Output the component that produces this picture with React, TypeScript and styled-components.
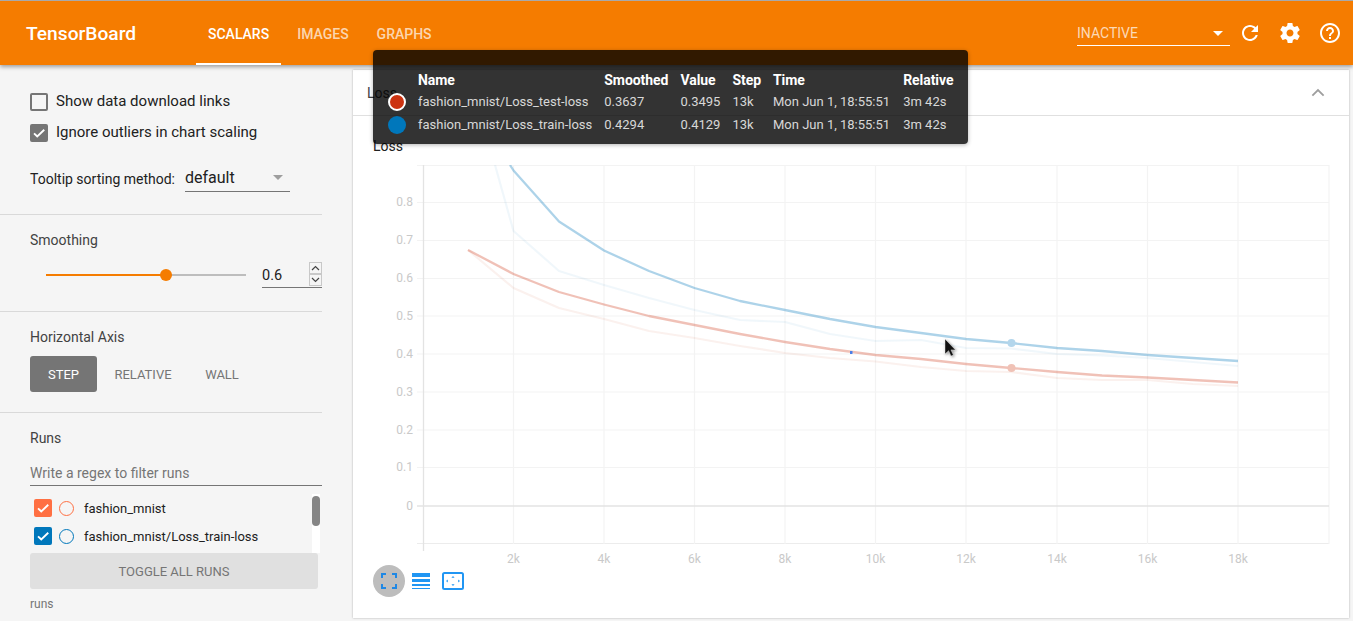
import React from 'react';
import styled, { createGlobalStyle } from 'styled-components';

const Global = createGlobalStyle`
  html, body { margin: 0; padding: 0; background: #f5f5f5; }
  body { width: 1353px; height: 621px; overflow: hidden; font-family: Roboto, "Liberation Sans", sans-serif; }
  * { box-sizing: border-box; }
`;
const Page = styled.div`
  width: 1353px; height: 621px; position: relative; overflow: hidden;
  display: flex; flex-direction: column; border-top: 1px solid #a9a9a9;
`;
const Toolbar = styled.header`
  height: 64px; flex: none; background: #f57c00; color: #fff; display: flex; align-items: stretch;
  box-shadow: 0 2px 4px rgba(0,0,0,.35); position: relative; z-index: 2;
`;
const Brand = styled.div`
  width: 196px; padding: 21px 0 0 26px; font-size: 19.2px; font-weight: 500; line-height: 24px; white-space: nowrap;
`;
const Tab = styled.div<{ $active?: boolean }>`
  padding: 24px 12px 0; margin-right: 4px; height: 64px; font-size: 14px; font-weight: 500; line-height: 18px;
  color: ${p => (p.$active ? '#fff' : 'rgba(255,255,255,.7)')};
  border-bottom: 2px solid ${p => (p.$active ? '#fff' : 'transparent')};
`;
const Spacer = styled.div` flex: 1; `;
const RunSelect = styled.div`
  width: 153px; height: 30px; margin-top: 15px; margin-right: 8px; border-bottom: 1px solid #fff; display: flex;
  justify-content: space-between; align-items: center; padding: 5px 7px 0 0;
  font-size: 14px; color: rgba(255,255,255,.72);
`;
const CaretDown = styled.div<{ $color: string; $size: number }>`
  width: 0; height: 0; border-left: ${p => p.$size}px solid transparent; border-right: ${p => p.$size}px solid transparent;
  border-top: ${p => p.$size}px solid ${p => p.$color};
`;
const ToolIcons = styled.div` display: flex; align-items: center; gap: 16px; padding-right: 11px; margin-top: -1px; `;
const Body = styled.div` flex: 1; display: flex; min-height: 0; `;
const Sidebar = styled.aside` width: 353px; flex: none; padding-right: 31px; color: #212121; `;
const Section = styled.section<{ $h: number; $pt: number }>`
  height: ${p => p.$h}px; padding: ${p => p.$pt}px 0 0 30px; border-bottom: 1px solid #d9d9d9;
`;
const LastSection = styled.section` padding: 16px 0 0 30px; `;
const CheckRow = styled.label`
  display: flex; align-items: center; height: 31px; font-size: 15px; color: #212121; gap: 8px; white-space: nowrap;
`;
const CheckText = styled.span` margin-top: -2px; `;
const Box = styled.span<{ $checked?: boolean }>`
  width: 18px; height: 18px; border-radius: 2px; flex: none; display: flex; align-items: center; justify-content: center;
  background: ${p => (p.$checked ? '#757575' : 'transparent')};
  border: 2px solid #757575;
`;
const SortRow = styled.div` display: flex; align-items: flex-start; margin-top: 20px; font-size: 14px; `;
const SortLabel = styled.span` padding-top: 3px; width: 155px; white-space: nowrap; `;
const SortSelect = styled.div`
  width: 105px; height: 25px; margin-top: -1px; border-bottom: 1px solid #757575; display: flex; justify-content: space-between; align-items: center;
  font-size: 16px; color: #212121; padding: 0 7px 3px 0;
`;
const Heading = styled.div` font-size: 14px; color: #424242; line-height: 18px; `;
const SliderRow = styled.div` display: flex; align-items: center; margin-top: 12px; `;
const Slider = styled.div`
  width: 200px; height: 2px; margin-left: 16px; background: #bdbdbd; position: relative;
`;
const SliderFill = styled.div` height: 2px; background: #f57c00; `;
const SliderThumb = styled.div`
  position: absolute; top: -5px; width: 12px; height: 12px; margin-left: -6px; border-radius: 50%; background: #f57c00;
`;
const NumberBox = styled.div`
  width: 60px; height: 27px; margin-left: 16px; border-bottom: 1px solid #757575; display: flex; justify-content: space-between;
  font-size: 14.5px; color: #212121; padding-top: 6px; position: relative;
`;
const Spin = styled.div`
  position: absolute; right: 0; top: 1px; display: flex; flex-direction: column; width: 13px;
`;
const SpinBtn = styled.div`
  width: 13px; height: 12px; border: 1px solid #c8c8c8; background: #f5f5f5; display: flex; align-items: center; justify-content: center;
`;
const AxisButtons = styled.div` display: flex; margin-top: 10px; `;
const AxisBtn = styled.div<{ $active?: boolean; $w: number }>`
  width: ${p => p.$w}px; height: 36px; border-radius: 3px; font-size: 13px; display: flex; align-items: center; justify-content: center;
  background: ${p => (p.$active ? '#757575' : 'transparent')};
  color: ${p => (p.$active ? '#fff' : '#757575')};
`;
const Regex = styled.div`
  margin-top: 18px; height: 21px; border-bottom: 1px solid #757575; font-size: 14px; color: #757575; line-height: 17px;
`;
const RunsList = styled.div`
  width: 290px; height: 59px; margin-top: 8px; position: relative; padding-left: 4px; overflow: hidden;
`;
const RunsTrack = styled.div`
  position: absolute; right: 0; top: 0; bottom: 0; width: 8px; background: #fff;
`;
const RunsThumb = styled.div`
  position: absolute; right: 0; top: 2px; width: 8px; height: 30px; border-radius: 4px; background: #858585;
`;
const RunRow = styled.div` height: 28px; display: flex; align-items: center; font-size: 13px; color: #212121; white-space: nowrap; `;
const RunBox = styled.span<{ $c: string }>`
  width: 18px; height: 18px; border-radius: 2px; background: ${p => p.$c}; display: flex; align-items: center; justify-content: center; flex: none;
`;
const RunDot = styled.span<{ $c: string }>`
  width: 15px; height: 15px; border-radius: 50%; border: 1.7px solid ${p => p.$c}; margin: 0 10px 0 7px; flex: none;
`;
const ToggleAll = styled.div`
  width: 288px; height: 36px; border-radius: 3px; background: #e0e0e0; color: #757575; font-size: 13px;
  display: flex; align-items: center; justify-content: center;
`;
const RunsNote = styled.div` font-size: 12px; color: #757575; margin-top: 8px; `;
const Main = styled.main` flex: 1; padding: 5px 4px 3px 0; min-width: 0; `;
const Card = styled.div`
  height: 548px; background: #fff; box-shadow: 0 0 2px rgba(0,0,0,.3); display: flex; flex-direction: column;
`;
const CardHead = styled.div`
  height: 46px; flex: none; border-bottom: 1px solid #e0e0e0; display: flex; align-items: center; justify-content: space-between;
  padding: 0 22px 0 14px; font-size: 14px; color: #424242;
`;
const CardBody = styled.div` flex: 1; padding: 20px 0 0 20px; position: relative; `;
const ChartTitle = styled.div` font-size: 14px; line-height: 20px; color: #212121; `;
const ChartSvg = styled.svg` display: block; position: absolute; left: 0; top: 49px; `;
const ChartTools = styled.div` position: absolute; left: 20px; top: 449px; display: flex; align-items: center; `;
const ToolBtn = styled.div<{ $active?: boolean }>`
  width: 32px; height: 32px; border-radius: 50%; display: flex; align-items: center; justify-content: center;
  background: ${p => (p.$active ? '#bdbdbd' : 'transparent')};
`;
const Tooltip = styled.div`
  position: absolute; left: 373px; top: 49px; width: 595px; height: 94px; background: rgba(0,0,0,.8); border-radius: 4px;
  box-shadow: 0 1px 4px rgba(0,0,0,.3); color: #fff; font-size: 13px; z-index: 5; padding: 20px 0 0 15px;
`;
const TipTable = styled.table` border-collapse: collapse; border-spacing: 0; `;
const Th = styled.th`
  font-weight: 700; font-size: 14px; letter-spacing: -.05px; text-align: left; padding: 0 12px 0 0; height: 20px; white-space: nowrap; line-height: 20px;
`;
const Td = styled.td`
  padding: 0 12px 0 0; height: 23px; white-space: nowrap; color: rgba(255,255,255,.82);
`;
const TimeTd = styled(Td)` padding-right: 13px; `;
const DotCell = styled.td` padding: 0; width: 30px; height: 23px; `;
const Swatch = styled.div<{ $c: string; $ring?: boolean }>`
  width: 18px; height: 18px; border-radius: 50%; background: ${p => p.$c};
  border: ${p => (p.$ring ? '2px solid #fff' : 'none')};
`;
const Cursor = styled.svg` position: absolute; left: 943px; top: 337px; z-index: 4; filter: drop-shadow(1px 1px 1.5px rgba(0,0,0,.45)); `;

const xs = [468, 513.5, 559, 604, 649, 694.5, 740, 785, 830, 875.5, 921, 966, 1011, 1057, 1102, 1147.5, 1193, 1238];
const OX = 353, OY = 165;
const poly = (pts: number[][]) => pts.map(([x, y]) => `${x - OX},${y - OY}`).join(' ');
const fromYs = (ys: number[], start = 0) => ys.map((y, i) => [xs[i + start], y]);
const blueSmooth = [[510, 165], ...fromYs([170.5, 221.5, 250.5, 271, 288, 301, 310, 319, 327, 333, 339, 343, 348, 351, 355, 358, 361], 1)];
const blueRaw = [[495, 165], ...fromYs([231, 271, 285, 298, 310, 320, 322, 334, 341, 340, 348, 348.5, 354, 355.5, 358, 362, 366], 1)];
const redSmooth = fromYs([250, 274, 292, 304.5, 316, 325, 334, 342, 349, 355, 359, 364, 368, 372, 375.5, 377.5, 380, 382.5]);
const redRaw = fromYs([250, 288, 308, 319, 331, 338, 346, 353, 358, 361.5, 367, 371, 372, 378, 380, 380, 384, 386]);

const yTicks: [string, number][] = [['0.8', 202.5], ['0.7', 240.5], ['0.6', 278.5], ['0.5', 316], ['0.4', 354], ['0.3', 392], ['0.2', 430], ['0.1', 467.5], ['0', 506]];
const xTicks: [string, number][] = [['2k', 513.5], ['4k', 604], ['6k', 694.5], ['8k', 785], ['10k', 875.5], ['12k', 966], ['14k', 1057], ['16k', 1147.5], ['18k', 1238]];

const Check = ({ c = '#fff' }: { c?: string }) => (
  <svg width="14" height="14" viewBox="0 0 24 24"><path d="M3.5 12.5l5.5 5.5L21 6.5" fill="none" stroke={c} strokeWidth="3.2" /></svg>
);

const Chart = () => (
  <ChartSvg width={996} height={400} viewBox="0 0 996 400">
    <g stroke="#f3f3f3" strokeWidth="1.2">
      <line x1="64" x2="976" y1="0.5" y2="0.5" />
      <line x1="64" x2="976" y1="378.5" y2="378.5" stroke="#ececec" />
      {yTicks.slice(0, -1).map(([l, y]) => <line key={l} x1="64" x2="976" y1={y - OY} y2={y - OY} />)}
      {xTicks.map(([l, x]) => <line key={l} x1={x - OX} x2={x - OX} y1="0" y2="379" />)}
      <line x1="976" x2="976" y1="0" y2="379" />
    </g>
    <line x1="70.5" x2="70.5" y1="0" y2="386" stroke="#e3e3e3" strokeWidth="1.3" />
    <line x1="64" x2="976" y1="341" y2="341" stroke="#e3e3e3" strokeWidth="1.3" />
    <g fontFamily="Roboto, sans-serif" fontSize="12" fill="#c9c9c9">
      {yTicks.map(([l, y]) => <text key={l} x="60" y={y - OY + 3.5} textAnchor="end">{l}</text>)}
      {xTicks.map(([l, x]) => <text key={l} x={x - OX} y="398" textAnchor="middle">{l}</text>)}
    </g>
    <g fill="none" strokeWidth="2.2" strokeLinejoin="round">
      <polyline points={poly(blueRaw)} stroke="#0077bb" strokeOpacity="0.06" />
      <polyline points={poly(redRaw)} stroke="#cc3311" strokeOpacity="0.07" />
    </g>
    <g fill="none" strokeWidth="2.3" strokeLinejoin="round">
      <polyline points={poly(blueSmooth)} stroke="#0077bb" strokeOpacity="0.32" />
      <polyline points={poly(redSmooth)} stroke="#cc3311" strokeOpacity="0.3" />
    </g>
    <circle cx={1011.5 - OX} cy={343 - OY} r="4" fill="#b3d6ec" />
    <circle cx={1011.5 - OX} cy={368 - OY} r="4" fill="#f0c2b6" />
    <rect x={851 - OX - 1} y={352 - OY - 1} width="2.5" height="3" fill="#4a7fe8" />
  </ChartSvg>
);

export default function App() {
  return (
    <Page>
      <Global />
      <Toolbar>
        <Brand>TensorBoard</Brand>
        <Tab $active>SCALARS</Tab>
        <Tab>IMAGES</Tab>
        <Tab>GRAPHS</Tab>
        <Spacer />
        <RunSelect><span>INACTIVE</span><CaretDown $color="#fff" $size={5} /></RunSelect>
        <ToolIcons>
          <svg width="24" height="24" viewBox="0 0 24 24" fill="#fff"><path d="M17.65 6.35C16.2 4.9 14.21 4 12 4c-4.42 0-7.99 3.58-7.99 8s3.57 8 7.99 8c3.73 0 6.84-2.55 7.73-6h-2.08c-.82 2.33-3.04 4-5.65 4-3.31 0-6-2.69-6-6s2.69-6 6-6c1.66 0 3.14.69 4.22 1.78L13 11h7V4l-2.35 2.35z" /></svg>
          <svg width="24" height="24" viewBox="0 0 24 24" fill="#fff"><path d="M19.43 12.98c.04-.32.07-.64.07-.98s-.03-.66-.07-.98l2.11-1.65c.19-.15.24-.42.12-.64l-2-3.46c-.12-.22-.39-.3-.61-.22l-2.49 1c-.52-.4-1.08-.73-1.69-.98l-.38-2.65C14.46 2.18 14.25 2 14 2h-4c-.25 0-.46.18-.49.42l-.38 2.65c-.61.25-1.17.59-1.69.98l-2.49-1c-.23-.09-.49 0-.61.22l-2 3.46c-.13.22-.07.49.12.64l2.11 1.65c-.04.32-.07.65-.07.98s.03.66.07.98l-2.11 1.65c-.19.15-.24.42-.12.64l2 3.46c.12.22.39.3.61.22l2.49-1c.52.4 1.08.73 1.69.98l.38 2.65c.03.24.24.42.49.42h4c.25 0 .46-.18.49-.42l.38-2.65c.61-.25 1.17-.59 1.69-.98l2.49 1c.23.09.49 0 .61-.22l2-3.46c.12-.22.07-.49-.12-.64l-2.11-1.65zM12 15.5c-1.93 0-3.5-1.57-3.5-3.5s1.57-3.5 3.5-3.5 3.5 1.57 3.5 3.5-1.57 3.5-3.5 3.5z" /></svg>
          <svg width="24" height="24" viewBox="0 0 24 24" fill="#fff"><path d="M11 18h2v-2h-2v2zm1-16C6.48 2 2 6.48 2 12s4.48 10 10 10 10-4.48 10-10S17.52 2 12 2zm0 18c-4.41 0-8-3.59-8-8s3.59-8 8-8 8 3.59 8 8-3.59 8-8 8zm0-14c-2.21 0-4 1.79-4 4h2c0-1.1.9-2 2-2s2 .9 2 2c0 2-3 1.75-3 5h2c0-2.25 3-2.5 3-5 0-2.21-1.79-4-4-4z" /></svg>
        </ToolIcons>
      </Toolbar>
      <Body>
        <Sidebar>
          <Section $h={150} $pt={21}>
            <CheckRow><Box /><CheckText>Show data download links</CheckText></CheckRow>
            <CheckRow><Box $checked><Check /></Box><CheckText>Ignore outliers in chart scaling</CheckText></CheckRow>
            <SortRow>
              <SortLabel>Tooltip sorting method:</SortLabel>
              <SortSelect><span>default</span><CaretDown $color="#9e9e9e" $size={5} /></SortSelect>
            </SortRow>
          </Section>
          <Section $h={97} $pt={16}>
            <Heading>Smoothing</Heading>
            <SliderRow>
              <Slider>
                <SliderFill style={{ width: `${0.6 * 100}%` }} />
                <SliderThumb style={{ left: `${0.6 * 100}%` }} />
              </Slider>
              <NumberBox>
                0.6
                <Spin>
                  <SpinBtn><svg width="9" height="6" viewBox="0 0 9 6"><path d="M1 5l3.5-3.5L8 5" fill="none" stroke="#444" strokeWidth="1.2" /></svg></SpinBtn>
                  <SpinBtn><svg width="9" height="6" viewBox="0 0 9 6"><path d="M1 1l3.5 3.5L8 1" fill="none" stroke="#444" strokeWidth="1.2" /></svg></SpinBtn>
                </Spin>
              </NumberBox>
            </SliderRow>
          </Section>
          <Section $h={101} $pt={16}>
            <Heading>Horizontal Axis</Heading>
            <AxisButtons>
              <AxisBtn $active $w={67}>STEP</AxisBtn>
              <AxisBtn $w={92}>RELATIVE</AxisBtn>
              <AxisBtn $w={66}>WALL</AxisBtn>
            </AxisButtons>
          </Section>
          <LastSection>
            <Heading>Runs</Heading>
            <Regex>Write a regex to filter runs</Regex>
            <RunsList>
              <RunsTrack />
              <RunsThumb />
              <RunRow><RunBox $c="#ff7043"><Check /></RunBox><RunDot $c="#ff7043" />fashion_mnist</RunRow>
              <RunRow><RunBox $c="#0077bb"><Check /></RunBox><RunDot $c="#0077bb" />fashion_mnist/Loss_train-loss</RunRow>
            </RunsList>
            <ToggleAll>TOGGLE ALL RUNS</ToggleAll>
            <RunsNote>runs</RunsNote>
          </LastSection>
        </Sidebar>
        <Main>
          <Card>
            <CardHead>
              <span>Loss</span>
              <svg width="18" height="18" viewBox="0 0 24 24"><path d="M4.5 15.5L12 8l7.5 7.5" fill="none" stroke="#9e9e9e" strokeWidth="2.4" /></svg>
            </CardHead>
            <CardBody>
              <ChartTitle>Loss</ChartTitle>
              <Chart />
              <ChartTools>
                <ToolBtn $active>
                  <svg width="16" height="16" viewBox="0 0 16 16" fill="none" stroke="#1e88e5" strokeWidth="2"><path d="M1 5V1h4M11 1h4v4M15 11v4h-4M5 15H1v-4" /></svg>
                </ToolBtn>
                <ToolBtn>
                  <svg width="18" height="16" viewBox="0 0 18 16" fill="#2196f3"><rect y="0" width="18" height="4" /><rect y="6" width="18" height="3" /><rect y="11" width="18" height="2" /><rect y="15" width="18" height="1" /></svg>
                </ToolBtn>
                <ToolBtn>
                  <svg width="22" height="18" viewBox="0 0 22 18" fill="#2196f3"><rect x="1" y="1" width="20" height="16" rx="1.5" fill="none" stroke="#2196f3" strokeWidth="2" /><path d="M11 4l1.6 1.8h-3.2zM11 14l1.6-1.8h-3.2zM4 9l1.8-1.6v3.2zM18 9l-1.8-1.6v3.2z" /></svg>
                </ToolBtn>
              </ChartTools>
            </CardBody>
          </Card>
        </Main>
      </Body>
      <Tooltip>
        <TipTable>
          <thead>
            <tr><Th /><Th>Name</Th><Th>Smoothed</Th><Th>Value</Th><Th>Step</Th><Th>Time</Th><Th>Relative</Th></tr>
          </thead>
          <tbody>
            <tr><DotCell><Swatch $c="#cc3311" $ring /></DotCell><Td>fashion_mnist/Loss_test-loss</Td><Td>0.3637</Td><Td>0.3495</Td><Td>13k</Td><TimeTd>Mon Jun 1, 18:55:51</TimeTd><Td>3m 42s</Td></tr>
            <tr><DotCell><Swatch $c="#0077bb" /></DotCell><Td>fashion_mnist/Loss_train-loss</Td><Td>0.4294</Td><Td>0.4129</Td><Td>13k</Td><TimeTd>Mon Jun 1, 18:55:51</TimeTd><Td>3m 42s</Td></tr>
          </tbody>
        </TipTable>
      </Tooltip>
      <Cursor width="14" height="20" viewBox="0 0 14 20"><path d="M2 1v15l3.6-3.3 2.4 5.4 2.4-1-2.4-5.2H12.5z" fill="#111" stroke="#fff" strokeWidth="0.4" /></Cursor>
    </Page>
  );
}
